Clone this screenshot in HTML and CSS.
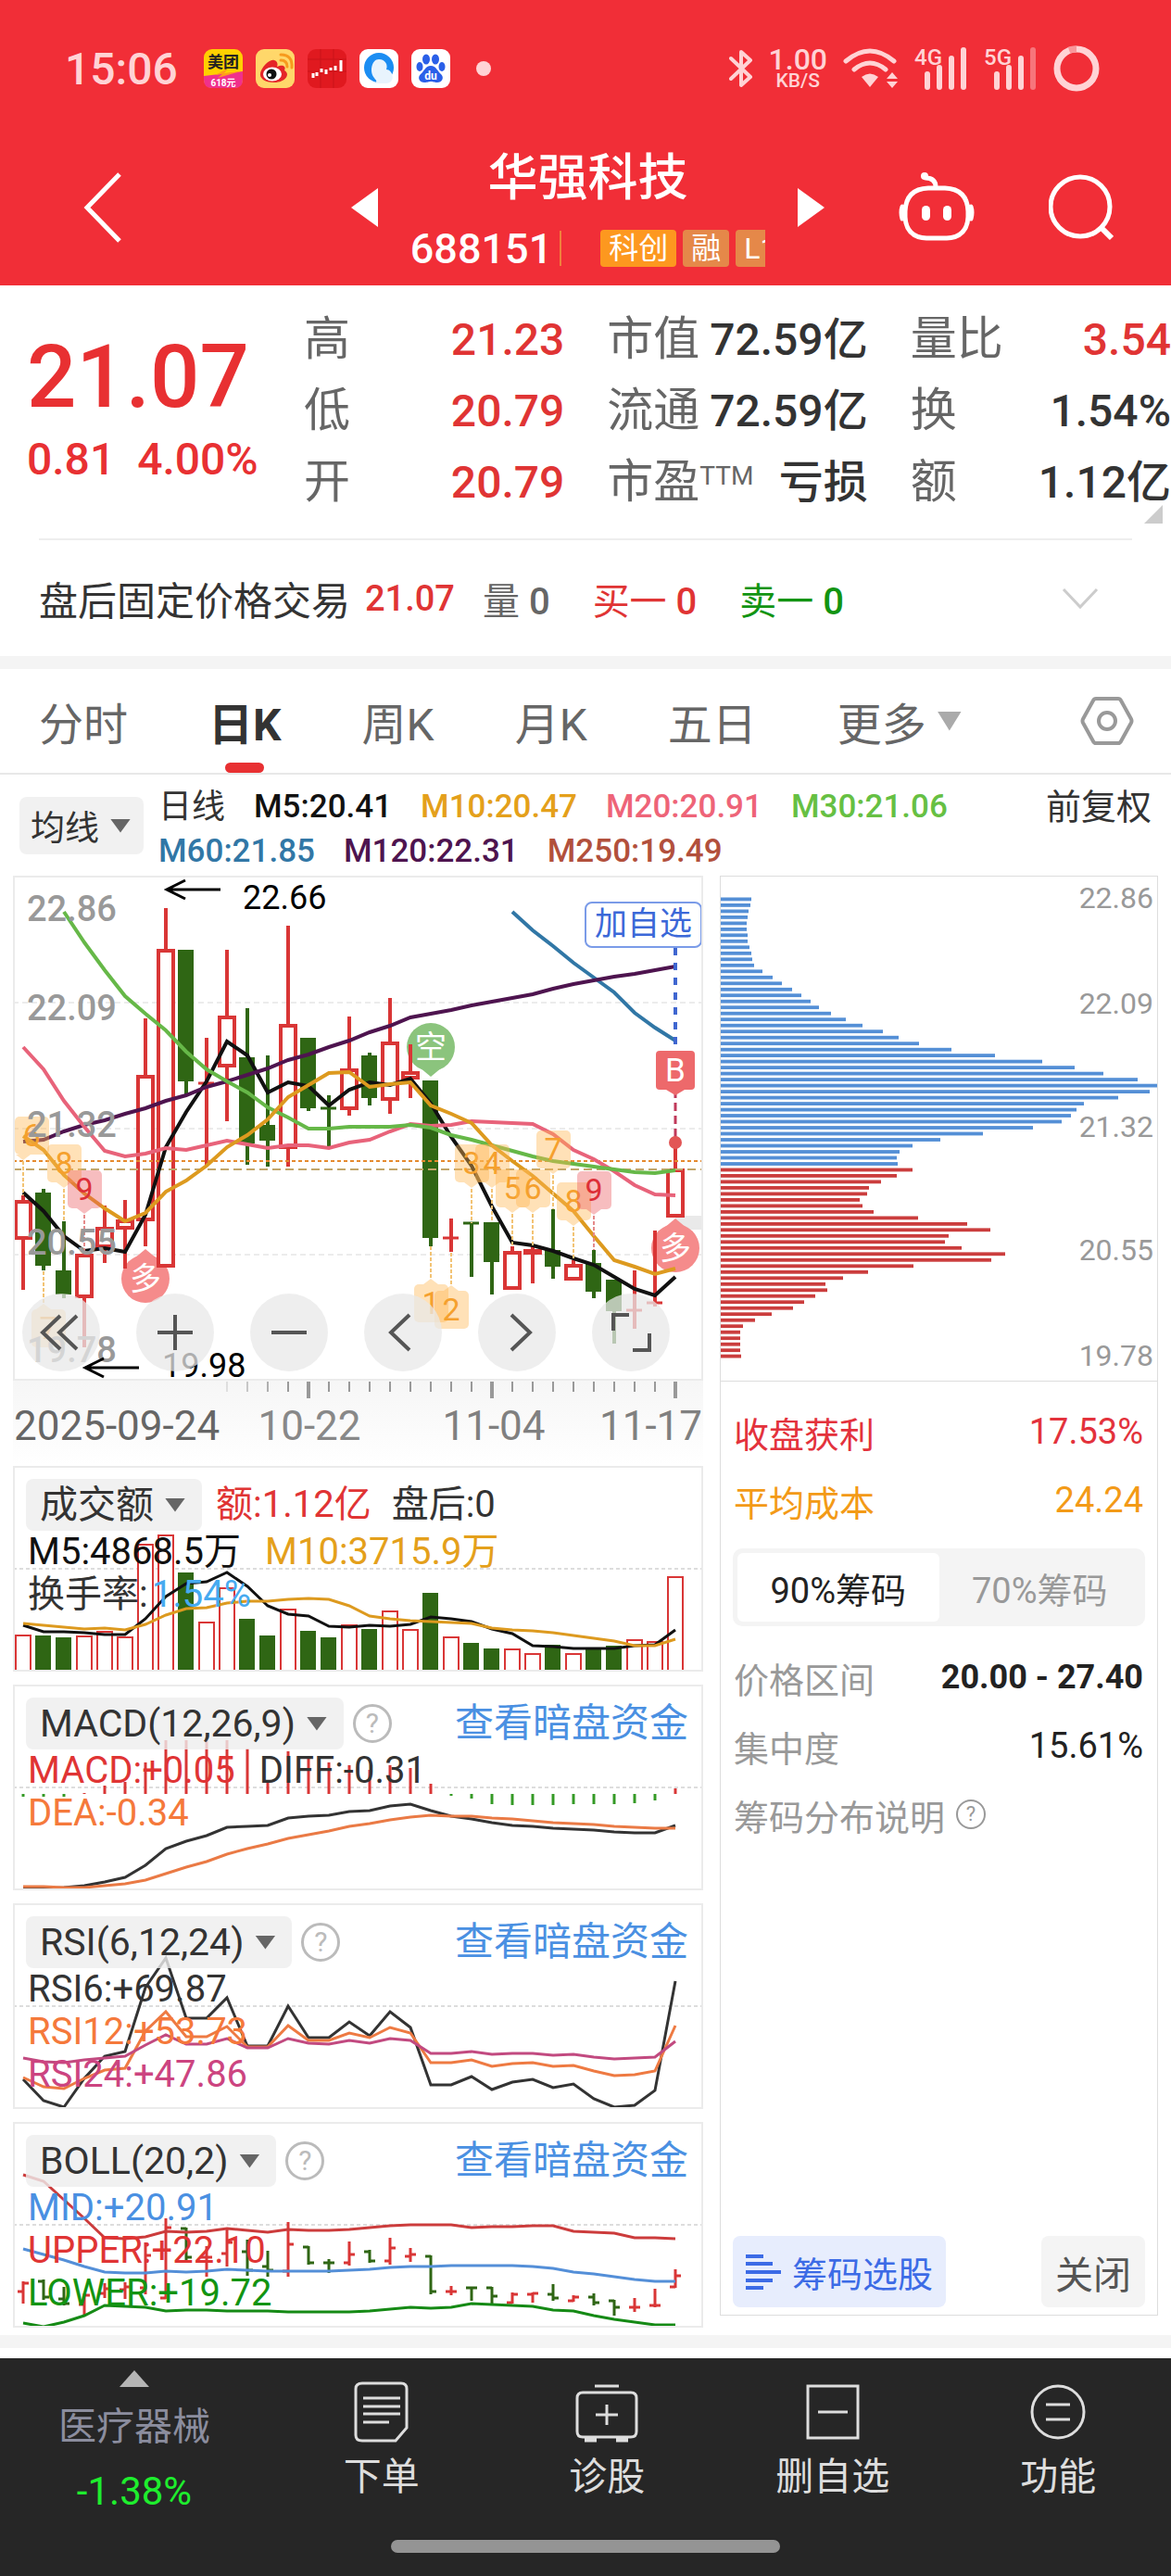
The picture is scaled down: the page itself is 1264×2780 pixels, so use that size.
FILE: index.html
```html
<!DOCTYPE html>
<html lang="zh-CN">
<head>
    <meta charset="UTF-8">
    <meta name="viewport" content="width=device-width, initial-scale=1.0">
    <title>华强科技 688151</title>
    <link rel="stylesheet" href="styles.css">
</head>
<body>

    <header class="header">
        <div class="status-bar">
            <span class="clock">15:06</span>
            <svg class="app-icon" viewBox="0 0 42 42">
                <rect width="42" height="42" rx="9" fill="#ffd000"/>
                <path d="M0 29 L42 24 V33 Q42 42 33 42 H9 Q0 42 0 33Z" fill="#f0308c"/>
                <path d="M12 28 L26 21 L22 26 L40 24 L15 31 L20 27Z" fill="#ff9d1c"/>
                <text x="21" y="20" text-anchor="middle" font-size="17" font-weight="700" fill="#222">美团</text>
                <text x="21" y="40" text-anchor="middle" font-size="10" font-weight="700" fill="#fff">618元</text>
            </svg>
            <svg class="app-icon" viewBox="0 0 42 42">
                <rect width="42" height="42" rx="9" fill="#ffd76a"/>
                <path d="M20 12 C24 13 24 17 23 19 C30 16 33 19 31 23 C38 27 32 36 20 36 C9 36 4 31 5 26 C6 20 15 10 20 12Z" fill="#e52528"/>
                <ellipse cx="18" cy="27" rx="10" ry="7.500" fill="#fff"/>
                <circle cx="17" cy="27" r="5.500" fill="#111"/>
                <circle cx="15" cy="28" r="2" fill="#fff"/>
                <path d="M27 12 Q34 12 34 19 M27 6 Q40 6 39 20" fill="none" stroke="#f79a1d" stroke-width="3" stroke-linecap="round"/>
            </svg>
            <svg class="app-icon" viewBox="0 0 42 42">
                <rect width="42" height="42" rx="9" fill="#e0191f"/>
                <path d="M0 11 H42 M0 24 H42 M14 0 V42 M28 0 V42" stroke="#c9151b" stroke-width="1"/>
                <path d="M6 26 V31 M10 25 V29 M15 21 V25 M20 22 V27 M25 20 V23 M30 18 V23 M36 12 V24" stroke="#fff" stroke-width="3"/>
            </svg>
            <svg class="app-icon" viewBox="0 0 42 42">
                <rect width="42" height="42" rx="9" fill="#fff"/>
                <circle cx="21" cy="20" r="16" fill="#1b8df2"/>
                <path d="M21 11 C28 11 31 17 29 22 C36 22 40 36 29 37 H15 C24 34 12 33 13 21 C14 14 17 11 21 11Z" fill="#e8f4fd"/>
            </svg>
            <svg class="app-icon" viewBox="0 0 42 42">
                <rect width="42" height="42" rx="9" fill="#fff"/>
                <g fill="#2a5fe8">
                    <ellipse cx="16" cy="11" rx="4" ry="5.500"/>
                    <ellipse cx="26" cy="11" rx="4" ry="5.500"/>
                    <ellipse cx="9" cy="19" rx="3.500" ry="5"/>
                    <ellipse cx="33" cy="19" rx="3.500" ry="5"/>
                    <path d="M21 18 C27 18 28 24 32 27 C36 31 33 36 28 36 C24 36 23 35 21 35 C19 35 18 36 14 36 C9 36 6 31 10 27 C14 24 15 18 21 18Z"/>
                </g>
                <text x="21" y="33" text-anchor="middle" font-size="12" font-weight="700" fill="#fff">du</text>
            </svg>
            <span class="more-dot"></span>

            <div class="status-right">
                <svg width="26" height="44" viewBox="0 0 26 44"><path d="M2 11 L23 31 L13 40 V4 L23 13 L2 33" fill="none" stroke="#ffd3d5" stroke-width="4" stroke-linejoin="round" stroke-linecap="round"/></svg>
                <span class="speed"><b>1.00</b><small>KB/S</small></span>
                <svg width="60" height="44" viewBox="0 0 60 44">
                    <path d="M3 14 Q29 -8 55 14 M12 23 Q29 9 46 23" fill="none" stroke="#ffd3d5" stroke-width="5" stroke-linecap="round"/>
                    <path d="M20 31 Q29 24 38 31 L29 42Z" fill="#ffd3d5"/>
                    <path d="M47 33 L53 26 L59 33Z M47 36 L53 43 L59 36Z" fill="#ffd3d5"/>
                </svg>
                <svg width="58" height="46" viewBox="0 0 58 46">
                    <text x="0" y="19" class="net">4G</text>
                    <path d="M14 43 V29 M27 43 V22 M40 43 V12 M53 43 V3" stroke="#ffd3d5" stroke-width="6" stroke-linecap="round"/>
                </svg>
                <svg width="58" height="46" viewBox="0 0 58 46">
                    <text x="0" y="19" class="net">5G</text>
                    <path d="M14 43 V29 M27 43 V22 M40 43 V12" stroke="#ffd3d5" stroke-width="6" stroke-linecap="round"/>
                    <path d="M53 43 V3" stroke="#f7757b" stroke-width="6" stroke-linecap="round"/>
                </svg>
                <svg width="50" height="50" viewBox="0 0 50 50">
                    <circle cx="25" cy="25" r="21" fill="none" stroke="#ffd3d5" stroke-width="7"/>
                    <path d="M17 5 Q20 4 25 4" fill="none" stroke="#f9979b" stroke-width="7"/>
                </svg>
            </div>
        </div>

        <div class="title-bar">
            <button class="icon-btn back" aria-label="返回">
                <svg width="42" height="76" viewBox="0 0 42 76"><path d="M39 2 L4 38 L39 74" fill="none" stroke="#fff" stroke-width="5"/></svg>
            </button>
            <div class="switcher">
                <button class="icon-btn" aria-label="上一只">
                    <svg width="29" height="42" viewBox="0 0 29 42"><path d="M29 0 V42 L0 21Z" fill="#fff"/></svg>
                </button>
                <div class="stock">
                    <h1>华强科技</h1>
                    <div class="code-row">
                        <span class="code">688151</span>
                        <span class="bar"></span>
                        <div class="tags">
                            <span class="tag tag-main">科创</span>
                            <span class="tag">融</span>
                            <span class="tag tag-cut">L1</span>
                        </div>
                    </div>
                </div>
                <button class="icon-btn" aria-label="下一只">
                    <svg width="29" height="42" viewBox="0 0 29 42"><path d="M0 0 V42 L29 21Z" fill="#fff"/></svg>
                </button>
            </div>
            <button class="icon-btn robot" aria-label="智能助手">
                <svg width="82" height="76" viewBox="0 0 82 76">
                    <g fill="none" stroke="#fff" stroke-width="5" stroke-linecap="round">
                        <path d="M40 18 Q40 8 29 8"/>
                        <path d="M32 19 H50 Q74 20 75 44 V50 Q74 72 52 73 H30 Q8 72 7 50 V44 Q8 20 32 19Z"/>
                        <path d="M4 39 Q2 45 4 52 M78 39 Q80 45 78 52"/>
                    </g>
                    <circle cx="28" cy="6" r="4" fill="#fff"/>
                    <rect x="25" y="38" width="9" height="16" rx="4.500" fill="#fff"/>
                    <rect x="48" y="38" width="9" height="16" rx="4.500" fill="#fff"/>
                </svg>
            </button>
            <button class="icon-btn" aria-label="搜索">
                <svg width="70" height="72" viewBox="0 0 70 72"><circle cx="34" cy="35" r="32" fill="none" stroke="#fff" stroke-width="5"/><path d="M56 57 L68 69" stroke="#fff" stroke-width="6"/></svg>
            </button>
        </div>
    </header>

    <section class="quote">
        <div class="price-box">
            <div class="price">21.07</div>
            <div class="change"><span>0.81</span><span>4.00%</span></div>
        </div>
        <dl class="stats">
            <div><dt>高</dt><dd class="up">21.23</dd></div>
            <div><dt>低</dt><dd class="up">20.79</dd></div>
            <div><dt>开</dt><dd class="up">20.79</dd></div>
        </dl>
        <dl class="stats">
            <div><dt>市值</dt><dd>72.59亿</dd></div>
            <div><dt>流通</dt><dd>72.59亿</dd></div>
            <div><dt>市盈<sup>TTM</sup></dt><dd>亏损</dd></div>
        </dl>
        <dl class="stats">
            <div><dt>量比</dt><dd class="up">3.54</dd></div>
            <div><dt>换</dt><dd>1.54%</dd></div>
            <div><dt>额</dt><dd>1.12亿</dd></div>
        </dl>
        <span class="corner"></span>
    </section>

    <section class="after-hours">
        <span class="after-title">盘后固定价格交易</span>
        <span class="up after-price">21.07</span>
        <span class="grey">量 <b>0</b></span>
        <span class="up">买一 <b>0</b></span>
        <span class="down">卖一 <b>0</b></span>
        <button class="icon-btn" aria-label="展开">
            <svg width="40" height="24" viewBox="0 0 40 24"><path d="M2 2 L20 21 L38 2" fill="none" stroke="#ccc" stroke-width="3"/></svg>
        </button>
    </section>

    <nav class="tabs">
        <button>分时</button>
        <button class="active">日K</button>
        <button>周K</button>
        <button>月K</button>
        <button>五日</button>
        <button>更多<i class="caret caret-light"></i></button>
        <button class="settings" aria-label="设置">
            <svg width="58" height="54" viewBox="0 0 58 54">
                <path d="M17 3 H41 Q43 3 44 5 L55 25 Q56 27 55 29 L44 49 Q43 51 41 51 H17 Q15 51 14 49 L3 29 Q2 27 3 25 L14 5 Q15 3 17 3Z" fill="none" stroke="#999" stroke-width="4"/>
                <circle cx="29" cy="27" r="9" fill="none" stroke="#999" stroke-width="4"/>
            </svg>
        </button>
    </nav>

    <section class="legend">
        <button class="pill pill-small">均线<i class="caret"></i></button>
        <div class="legend-items">
            <span>日线</span>
            <span class="m5">M5:20.41</span>
            <span class="m10">M10:20.47</span>
            <span class="m20">M20:20.91</span>
            <span class="m30">M30:21.06</span>
            <span class="m60">M60:21.85</span>
            <span class="m120">M120:22.31</span>
            <span class="m250">M250:19.49</span>
        </div>
        <button class="adjust">前复权</button>
    </section>

    <main class="board">
        <div class="charts">
            <div class="stack framed">
                <svg id="kline" class="chart" viewBox="0 0 745 545"></svg>
                <button class="add-watch">加自选</button>
                <div class="controls">
                    <button aria-label="最早"><svg viewBox="0 0 84 84"><path d="M41 24 L22 42 L41 60 M59 24 L40 42 L59 60"/></svg></button>
                    <button aria-label="放大"><svg viewBox="0 0 84 84"><path d="M23 42 H61 M42 23 V61"/></svg></button>
                    <button aria-label="缩小"><svg viewBox="0 0 84 84"><path d="M23 42 H61"/></svg></button>
                    <button aria-label="左移"><svg viewBox="0 0 84 84"><path d="M49 23 L29 42 L49 61"/></svg></button>
                    <button aria-label="右移"><svg viewBox="0 0 84 84"><path d="M36 23 L56 42 L36 61"/></svg></button>
                    <button aria-label="全屏"><svg viewBox="0 0 84 84"><path d="M23 40 V23 H40 M62 43 V61 H44"/></svg></button>
                </div>
            </div>
            <svg id="axis" class="axis" viewBox="0 0 745 92"></svg>

            <div class="stack framed">
                <svg id="volume" class="chart" viewBox="0 0 745 222"></svg>
                <div class="info">
                    <div class="info-head">
                        <button class="pill">成交额<i class="caret"></i></button>
                        <span class="up">额:1.12亿</span>
                        <span class="after">盘后:0</span>
                    </div>
                    <p><span class="m5">M5:4868.5万</span><span class="m10">M10:3715.9万</span></p>
                    <p>换手率:<em class="rate">1.54%</em></p>
                </div>
            </div>

            <div class="stack framed">
                <svg id="macd" class="chart" viewBox="0 0 745 222"></svg>
                <div class="info">
                    <div class="info-head">
                        <button class="pill">MACD(12,26,9)<i class="caret"></i></button>
                        <button class="help" aria-label="说明">?</button>
                        <a href="#">查看暗盘资金</a>
                    </div>
                    <p><span class="up">MACD:+0.05</span><span>DIFF:-0.31</span></p>
                    <p class="orange">DEA:-0.34</p>
                </div>
            </div>

            <div class="stack framed">
                <svg id="rsi" class="chart" viewBox="0 0 745 222"></svg>
                <div class="info">
                    <div class="info-head">
                        <button class="pill">RSI(6,12,24)<i class="caret"></i></button>
                        <button class="help" aria-label="说明">?</button>
                        <a href="#">查看暗盘资金</a>
                    </div>
                    <p>RSI6:+69.87</p>
                    <p class="orange">RSI12:+53.73</p>
                    <p class="magenta">RSI24:+47.86</p>
                </div>
            </div>

            <div class="stack framed">
                <svg id="boll" class="chart" viewBox="0 0 745 222"></svg>
                <div class="info">
                    <div class="info-head">
                        <button class="pill">BOLL(20,2)<i class="caret"></i></button>
                        <button class="help" aria-label="说明">?</button>
                        <a href="#">查看暗盘资金</a>
                    </div>
                    <p class="blue">MID:+20.91</p>
                    <p class="up">UPPER:+22.10</p>
                    <p class="down">LOWER:+19.72</p>
                </div>
            </div>
        </div>

        <aside class="chips">
            <svg id="chips" class="chart" viewBox="0 0 473 545"></svg>
            <div class="chips-body">
                <div class="row red"><span>收盘获利</span><span>17.53%</span></div>
                <div class="row gold"><span>平均成本</span><span>24.24</span></div>
                <div class="toggle">
                    <button class="on">90%筹码</button>
                    <button>70%筹码</button>
                </div>
                <div class="row"><span>价格区间</span><strong>20.00 - 27.40</strong></div>
                <div class="row"><span>集中度</span><b>15.61%</b></div>
                <div class="row note"><span>筹码分布说明</span><button class="help help-small" aria-label="说明">?</button></div>
                <div class="chips-foot">
                    <button class="pick">
                        <svg width="38" height="38" viewBox="0 0 38 38"><path d="M0 2 H19 M0 10 H29 M0 19 H38 M0 28 H29 M0 36 H19" stroke="#3c6be6" stroke-width="4"/></svg>
                        筹码选股
                    </button>
                    <button class="close">关闭</button>
                </div>
            </div>
        </aside>
    </main>

    <footer class="bottom">
        <nav class="bottom-nav">
            <a href="#" class="sector">
                <i class="tri-up"></i>
                <span>医疗器械</span>
                <b>-1.38%</b>
            </a>
            <a href="#">
                <svg width="60" height="66" viewBox="0 0 60 66"><path d="M9 2 H51 Q57 2 57 8 V50 L45 64 H9 Q2 64 2 58 V8 Q2 2 9 2Z M10 18 H50 M10 27 H50 M10 35 H50 M10 44 H38" fill="none" stroke="#ddd" stroke-width="3"/></svg>
                <span>下单</span>
            </a>
            <a href="#">
                <svg width="68" height="66" viewBox="0 0 68 66"><path d="M21 5 H47 M8 12 H60 Q66 12 66 18 V54 Q66 60 60 60 H8 Q2 60 2 54 V18 Q2 12 8 12Z M34 25 V47 M22 36 H46" fill="none" stroke="#ddd" stroke-width="3"/><path d="M10 63 H23 M44 63 H57" stroke="#ddd" stroke-width="5"/></svg>
                <span>诊股</span>
            </a>
            <a href="#">
                <svg width="58" height="66" viewBox="0 0 58 66"><path d="M2 5 H56 V61 H2Z M13 33 H45" fill="none" stroke="#ddd" stroke-width="3"/></svg>
                <span>删自选</span>
            </a>
            <a href="#">
                <svg width="60" height="66" viewBox="0 0 60 66"><path d="M17 25 H43 M17 41 H43" stroke="#ddd" stroke-width="3"/><circle cx="30" cy="33" r="28" fill="none" stroke="#ddd" stroke-width="3"/></svg>
                <span>功能</span>
            </a>
        </nav>
        <div class="home-bar"></div>
    </footer>

    <script src="charts.js"></script>
</body>
</html>
```

FILE: styles.css
```css
* {
    box-sizing: border-box;
}
body {
    margin: 0;
    background: #fff;
    color: #333;
    font-family: Roboto, "Noto Sans CJK SC", sans-serif;
    overflow-x: hidden;
}
h1, p, dl, dd {
    margin: 0;
}
button {
    font: inherit;
    color: inherit;
    background: none;
    border: none;
    padding: 0;
    cursor: pointer;
}
a {
    text-decoration: none;
}
svg {
    display: block;
}
.up { color: #e03434; }
.down { color: #129412; }
.grey { color: #666; }
.orange { color: #f5793b; }
.magenta { color: #cc4480; }
.blue { color: #4a90e2; }
.m5 { color: #111; }
.m10 { color: #e4a01b; }
.m20 { color: #ee6478; }
.m30 { color: #66c043; }
.m60 { color: #3177a6; }
.m120 { color: #4e144f; }
.m250 { color: #b2503c; }

/* header */
.header {
    background: #f12e37;
    color: #fff;
}
.status-bar {
    display: flex;
    align-items: center;
    gap: 14px;
    height: 140px;
    padding: 8px 77px 0 70px;
    color: #ffd3d5;
}
.clock {
    font-size: 48px;
    font-weight: 500;
    margin-right: 14px;
}
.app-icon {
    width: 42px;
    height: 42px;
}
.more-dot {
    width: 16px;
    height: 16px;
    margin-left: 14px;
    border-radius: 50%;
    background: #ffd3d5;
}
.status-right {
    display: flex;
    align-items: center;
    gap: 17px;
    margin-left: auto;
}
.speed {
    display: flex;
    flex-direction: column;
    align-items: center;
}
.speed b {
    font-size: 32px;
    line-height: 26px;
    font-weight: 500;
}
.speed small {
    font-size: 21px;
    line-height: 20px;
    font-weight: 500;
}
.net {
    font-size: 24px;
    font-weight: 500;
    fill: #ffd3d5;
}
.title-bar {
    display: flex;
    align-items: center;
    gap: 80px;
    height: 168px;
    padding: 0 62px 0 90px;
}
.back {
    margin-right: auto;
}
.robot {
    margin-bottom: 4px;
}
.switcher {
    display: flex;
    align-items: center;
}
.stock {
    width: 453px;
    padding-top: 2px;
    text-align: center;
}
.stock h1 {
    font-size: 54px;
    line-height: 86px;
    font-weight: 500;
}
.code-row {
    display: flex;
    align-items: center;
    justify-content: center;
    height: 64px;
}
.code {
    font-size: 45px;
    font-weight: 500;
}
.bar {
    width: 2px;
    height: 38px;
    margin: 0 42px 0 8px;
    background: #f0803c;
}
.tags {
    display: flex;
    gap: 7px;
    width: 178px;
    overflow: hidden;
}
.tag {
    flex: none;
    padding: 0 9px;
    font-size: 32px;
    line-height: 40px;
    border-radius: 4px;
    background: #e58849;
}
.tag-main {
    background: #fd981f;
}

/* quote */
.quote {
    position: relative;
    display: grid;
    grid-template-columns: 253px repeat(3, 1fr);
    column-gap: 46px;
    padding: 20px 0 22px 29px;
    white-space: nowrap;
}
.price-box {
    padding-top: 22px;
    color: #e83032;
    font-weight: 500;
}
.price {
    font-size: 94px;
    line-height: 114px;
}
.change {
    display: flex;
    gap: 24px;
    font-size: 48px;
    line-height: 64px;
}
.stats div {
    display: flex;
    justify-content: space-between;
    font-size: 48px;
    line-height: 77px;
    height: 77px;
}
.stats dt {
    font-size: 50px;
    color: #666;
}
.stats dd {
    font-weight: 500;
}
.stats sup {
    font-size: 28px;
    line-height: 0;
    vertical-align: 14px;
}
.corner {
    position: absolute;
    right: 9px;
    bottom: 16px;
    width: 20px;
    height: 20px;
    background: #ccc;
    clip-path: polygon(100% 0, 100% 100%, 0 100%);
}
.after-hours {
    display: flex;
    align-items: center;
    gap: 46px;
    height: 127px;
    margin: 0 42px;
    padding-right: 36px;
    border-top: 2px solid #eee;
    font-size: 40px;
}
.after-hours .after-title {
    margin-right: -30px;
    font-size: 42px;
}
.after-hours .after-price {
    margin-right: -16px;
    font-size: 38px;
    font-weight: 500;
}
.after-hours b {
    font-weight: 500;
}
.after-hours .icon-btn {
    margin-left: auto;
}

/* tabs */
.tabs {
    display: flex;
    align-items: center;
    gap: 87px;
    height: 128px;
    padding: 0 40px 0 42px;
    border-top: 14px solid #f4f4f4;
    border-bottom: 2px solid #e8e8e8;
    font-size: 48px;
    color: #666;
}
.tabs button {
    position: relative;
    display: flex;
    align-items: center;
    gap: 12px;
    height: 112px;
}
.tabs .active {
    color: #333;
    font-weight: 700;
}
.tabs .active::after {
    content: "";
    position: absolute;
    left: 50%;
    bottom: 0;
    width: 42px;
    height: 11px;
    margin-left: -21px;
    border-radius: 6px;
    background: #e83032;
}
.tabs .settings {
    margin-left: auto;
}
.caret {
    width: 22px;
    height: 15px;
    background: #666;
    clip-path: polygon(0 0, 100% 0, 50% 100%);
}
.caret-light {
    width: 26px;
    height: 21px;
    background: #aaa;
}

/* moving averages */
.legend {
    display: flex;
    align-items: flex-start;
    gap: 16px;
    height: 109px;
    padding: 11px 21px 0;
}
.pill {
    display: flex;
    align-items: center;
    gap: 12px;
    height: 56px;
    padding: 0 18px 0 15px;
    border-radius: 8px;
    background: rgba(238, 238, 238, 0.8);
    font-size: 41px;
}
.pill-small {
    height: 62px;
    margin-top: 13px;
    padding: 0 14px 0 12px;
    font-size: 37px;
}
.legend-items {
    display: flex;
    flex-wrap: wrap;
    column-gap: 31px;
    width: 880px;
    font-size: 35px;
    line-height: 48px;
    font-weight: 500;
}
.legend-items span:first-child {
    font-size: 36px;
    font-weight: 400;
}
.adjust {
    margin-left: auto;
    font-size: 38px;
    line-height: 48px;
    white-space: nowrap;
}

/* charts */
.board {
    display: grid;
    grid-template-columns: 745fr 473fr;
    gap: 18px;
    padding: 0 14px 8px;
    border-bottom: 14px solid #f4f4f4;
}
.charts {
    display: flex;
    flex-direction: column;
}
.stack {
    display: grid;
    margin-bottom: 14px;
}
.stack > * {
    grid-area: 1 / 1;
}
.stack:first-child, .stack:last-child {
    margin-bottom: 0;
}
.framed {
    outline: 2px solid #ebebeb;
    outline-offset: -2px;
}
.chart, .axis {
    width: 100%;
    height: auto;
}
.axis {
    background: linear-gradient(#f6f6f6, #fff);
}
.add-watch {
    justify-self: end;
    align-self: start;
    width: 127px;
    height: 50px;
    margin: 28px 1px;
    border: 2px solid #7a9be8;
    border-radius: 8px;
    background: #fff;
    color: #3b68d8;
    font-size: 35px;
    line-height: 44px;
}
.controls {
    display: flex;
    justify-content: space-between;
    align-self: end;
    margin: 0 36px 10px 10px;
}
.controls button {
    width: 84px;
    height: 84px;
    border-radius: 50%;
    background: rgba(232, 232, 232, 0.75);
}
.controls path {
    fill: none;
    stroke: #555;
    stroke-width: 4;
}
.info {
    position: relative;
    padding: 14px 16px 0;
    font-size: 40px;
    line-height: 46px;
}
.info-head {
    display: flex;
    align-items: center;
    gap: 10px;
    margin-left: -2px;
    height: 56px;
}
.info-head .up {
    margin: 0 12px 0 5px;
}
.info-head a {
    margin-left: auto;
    font-size: 42px;
    color: #4a90e2;
}
.info p {
    display: flex;
    gap: 26px;
    height: 46px;
}
.info .rate {
    margin-left: -22px;
    font-style: normal;
    color: #46aaf0;
}
.help {
    width: 42px;
    height: 42px;
    border: 3px solid #bbb;
    border-radius: 50%;
    color: #bbb;
    font-size: 30px;
    line-height: 36px;
}
.help-small {
    width: 32px;
    height: 32px;
    border-width: 2px;
    border-color: #999;
    color: #999;
    font-size: 22px;
    line-height: 28px;
}

/* chip distribution */
.chips {
    display: flex;
    flex-direction: column;
    margin-bottom: 13px;
    outline: 1px solid #ddd;
    outline-offset: -1px;
}
.chips-body {
    display: flex;
    flex-direction: column;
    flex: 1;
    padding: 17px 14px 9px;
    border-top: 1px solid #ddd;
    font-size: 38px;
}
.row {
    display: flex;
    align-items: center;
    justify-content: space-between;
    height: 74px;
    padding: 0 2px 0 1px;
    color: #999;
}
.row b {
    font-weight: 400;
    color: #222;
}
.row strong {
    font-size: 36px;
    font-weight: 700;
    color: #222;
}
.red { color: #e3323c; }
.gold { color: #f39a17; }
.note {
    justify-content: flex-start;
    gap: 12px;
}
.toggle {
    display: flex;
    height: 84px;
    margin: 15px 0 18px;
    padding: 5px;
    border-radius: 10px;
    background: #f4f4f4;
    color: #999;
}
.toggle button {
    flex: 1;
    border-radius: 6px;
}
.toggle .on {
    background: #fff;
    color: #222;
}
.chips-foot {
    display: flex;
    justify-content: space-between;
    margin-top: auto;
}
.chips-foot button {
    display: flex;
    align-items: center;
    height: 77px;
    border-radius: 8px;
}
.pick {
    gap: 12px;
    padding: 0 14px;
    background: #e7edfd;
    color: #3c6be6;
}
.chips-foot .close {
    padding: 0 15px;
    background: #f4f4f4;
    color: #555;
    font-size: 41px;
}

/* bottom bar */
.bottom {
    margin-top: 11px;
    padding-bottom: 25px;
    background: #262626;
}
.bottom-nav {
    display: grid;
    grid-template-columns: 290px repeat(4, 1fr);
    height: 196px;
}
.bottom-nav a {
    display: flex;
    flex-direction: column;
    align-items: center;
    gap: 10px;
    padding-top: 25px;
    font-size: 41px;
    line-height: 54px;
    color: #ddd;
}
.bottom-nav .sector {
    gap: 16px;
    padding-top: 13px;
    color: #8b8d9e;
}
.sector b {
    font-size: 42px;
    font-weight: 400;
    color: #1eee2e;
}
.tri-up {
    width: 32px;
    height: 18px;
    background: #b5b5b5;
    clip-path: polygon(50% 0, 100% 100%, 0 100%);
}
.home-bar {
    width: 420px;
    height: 14px;
    margin: 0 auto;
    border-radius: 7px;
    background: #949494;
}
```

FILE: charts.js
```js
const RED = "#d93636";
const GREEN = "#2f6614";

// [direction, high, body top, body bottom, low]
const candles = [
    [1, 322, 327, 366, 417], [0, 315, 319, 393, 398], [0, 348, 398, 422, 426], [1, 380, 381, 425, 475],
    [1, 332, 354, 374, 390], [1, 327, 346, 356, 396], [1, 144, 201, 347, 373], [1, 33, 74, 394, 394],
    [0, 75, 75, 207, 220], [1, 163, 209, 210, 292], [1, 75, 141, 192, 247], [0, 133, 183, 270, 291],
    [0, 181, 251, 267, 293], [1, 50, 149, 274, 293], [0, 163, 163, 234, 237], [0, 221, 234, 235, 275],
    [1, 142, 194, 235, 242], [0, 178, 181, 224, 231], [1, 123, 167, 226, 240], [1, 170, 197, 204, 224],
    [0, 206, 206, 365, 373], [1, 345, 365, 366, 379], [0, 350, 350, 351, 404], [0, 349, 349, 389, 422],
    [1, 373, 378, 416, 416], [1, 373, 376, 380, 411], [0, 336, 377, 394, 406], [1, 387, 391, 407, 408],
    [0, 377, 390, 419, 426], [0, 407, 407, 439, 471], [1, 398, 438, 439, 456], [1, 357, 430, 431, 434],
    [1, 268, 295, 343, 343]
];

const x = i => 11 + 22 * i;
// price units to pixels in the main chart
const py = v => Math.round(v * 15 / 14);

function line(values, color, start = 0, width = 3) {
    const points = values.map((v, i) => `${x(i + start)},${v}`).join(" ");
    return `<polyline points="${points}" fill="none" stroke="${color}" stroke-width="${width}"/>`;
}

function average(values, color, start = 0) {
    return line(values.map(py), color, start, 4);
}

function dashed(y, color, dash, width = 1) {
    return `<path d="M0 ${y} H745" stroke="${color}" stroke-width="${width}" stroke-dasharray="${dash}"/>`;
}

function label(px, y, text, size, color, anchor = "start", weight = 400) {
    return `<text x="${px}" y="${y}" font-size="${size}" fill="${color}" text-anchor="${anchor}" font-weight="${weight}" dominant-baseline="central">${text}</text>`;
}

function candle([up, ...prices], i) {
    const cx = x(i);
    const [high, top, bottom, low] = prices.map(py);
    const color = up ? RED : GREEN;
    let out = `<path d="M${cx} ${high} V${top} M${cx} ${bottom} V${low}" stroke="${color}" stroke-width="4"/>`;
    if (bottom - top < 3) {
        out += `<path d="M${cx - 9} ${top} H${cx + 8}" stroke="${color}" stroke-width="3"/>`;
    } else if (up) {
        out += `<rect x="${cx - 8}" y="${top + 2}" width="16" height="${Math.max(bottom - top - 3, 2)}" fill="#fff" stroke="${RED}" stroke-width="4"/>`;
    } else {
        out += `<rect x="${cx - 9}" y="${top}" width="17" height="${bottom - top}" fill="${GREEN}"/>`;
    }
    return out;
}

// numbered signal: candle index, digit, box top, end of the dotted line
function signal([i, digit, boxTop, lineEnd, below, shift = 0]) {
    const cx = x(i);
    const bx = cx + shift;
    const top = py(boxTop);
    const hot = digit === 9;
    const fill = hot ? "rgba(235,90,95,.4)" : "rgba(255,184,84,.42)";
    const from = below ? top - 7 : top + 48;
    const tip = below
        ? `M${cx - 8} ${top} L${cx} ${top - 6} L${cx + 8} ${top}Z`
        : `M${cx - 8} ${top + 41} L${cx} ${top + 47} L${cx + 8} ${top + 41}Z`;
    return `<path d="M${cx} ${from} V${py(lineEnd)}" stroke="${hot ? "#e58a8a" : "#f2c374"}" stroke-width="2" stroke-dasharray="4 2"/>
        <rect x="${bx - 18}" y="${top}" width="37" height="41" rx="5" fill="${fill}"/>
        <path d="${tip}" fill="${fill}"/>` + label(bx, top + 20, digit, 34, hot ? "#dd2f38" : "#f5a02d", "middle");
}

function pin(cx, cy, text, color, dir) {
    return `<circle cx="${cx}" cy="${cy}" r="26" fill="${color}"/>
        <path d="M${cx - 12} ${cy + 22 * dir} L${cx} ${cy + 32 * dir} L${cx + 12} ${cy + 22 * dir}Z" fill="${color}"/>`
        + label(cx, cy, text, 34, "#fff", "middle");
}

const ma5 = [319,338,363,378,375,379,342,273,238,207,167,181,218,208,212,231,216,208,211,204,230,263,292,333,370,372,378,385,392,404,416,423,404];
const ma10 = [262,276,301,320,335,348,340,318,307,292,273,261,245,223,211,199,198,213,210,208,231,240,249,272,287,302,320,338,363,387,394,401,396];
const ma20 = [173,195,227,253,277,283,280,274,276,272,267,271,274,272,272,274,269,266,258,250,252,251,247,248,249,250,260,276,286,298,312,321,322];
const ma30 = [36,67,95,121,139,156,177,195,207,218,233,244,255,255,253,253,253,251,254,261,266,272,277,283,287,290,293,296,299,300,297];
const ma60 = [36,55,71,88,103,118,138,153,166];
const ma120 = [268,266,258,251,246,240,234,227,221,213,207,201,194,186,180,173,166,158,151,143,139,135,131,127,123,119,114,109,105,102,99,95,91];

const signals = [
    [0, 6, 243, 322, 0, 9], [1, 7, 437, 398, 1, 5], [2, 8, 271, 348], [3, 9, 297, 380],
    [20, 1, 412, 373, 1], [21, 2, 418, 379, 1],
    [22, 3, 271, 350], [23, 4, 271, 349], [24, 5, 296, 373], [25, 6, 296, 373],
    [26, 7, 257, 336], [27, 8, 309, 387], [28, 9, 298, 377]
];

document.getElementById("kline").innerHTML =
    [137, 273, 409].map(y => dashed(y, "#d8d8d8", "6 4")).join("")
    + `<rect x="715" y="367" width="30" height="15" fill="#e9e9e9"/>`
    + pin(143, 435, "多", "#f58b8b", -1) + pin(715, 402, "多", "#f58b8b", -1) + pin(451, 185, "空", "#8bc47d", 1)
    + candles.map(candle).join("")
    + dashed(308, "#e58a2e", "4 3", 2) + dashed(317, "#c2a66b", "9 5", 2)
    + average(ma5, "#111") + average(ma60, "#3177a6", 24) + average(ma120, "#4e144f")
    + average(ma20, "#e8637a") + average(ma30, "#66b848", 2) + average(ma10, "#dd9a1f")
    + `<path d="M715 78 V189" stroke="#3f66d0" stroke-width="4" stroke-dasharray="8 8"/>
       <path d="M715 189 V282" stroke="#c0395a" stroke-width="3" stroke-dasharray="9 5"/>
       <circle cx="715" cy="288" r="7" fill="#e25555"/>
       <rect x="694" y="189" width="42" height="42" rx="4" fill="#ed696b"/><path d="M705 231 L715 237 L725 231Z" fill="#ed696b"/>`
    + label(715, 210, "B", 35, "#fff", "middle")
    + signals.map(signal).join("")
    + [["22.86", 36], ["22.09", 143], ["21.32", 269], ["20.55", 396], ["19.78", 512]]
        .map(([t, y]) => label(15, y, t, 38, "#999", "start", 500)).join("")
    + `<path d="M224 15 H166 M186 5 L166 15 L186 25 M136 531 H78 M98 521 L78 531 L98 541" fill="none" stroke="#000" stroke-width="3"/>`
    + label(248, 24, "22.66", 36, "#000") + label(161, 529, "19.98", 36, "#000");

let ticks = "";
for (let i = 10; i <= 32; i++) {
    const major = (i - 14) % 9 === 0;
    ticks += `<path d="M${x(i)} 1 V${major ? 19 : 12}" stroke="#999" stroke-width="${major ? 4 : 2}" opacity="${Math.min(1, (i - 9) / 4)}"/>`;
}
document.getElementById("axis").innerHTML = ticks
    + label(1, 49, "2025-09-24", 44, "#666", "start")
    + label(320, 49, "10-22", 44, "#888", "middle")
    + label(519, 49, "11-04", 44, "#808080", "middle")
    + label(744, 49, "11-17", 44, "#808080", "end");

const volumes = [182,183,185,183,178,184,84,74,115,168,131,165,183,154,178,185,171,176,156,176,137,184,191,197,197,202,193,202,197,194,187,189,119];
document.getElementById("volume").innerHTML = dashed(111, "#ddd", "4 3", 2)
    + volumes.map((v, i) => candles[i][0]
        ? `<rect x="${x(i) - 8}" y="${v + 1}" width="16" height="${220 - v}" fill="#fff" stroke="${RED}" stroke-width="2"/>`
        : `<rect x="${x(i) - 9}" y="${v}" width="17" height="${222 - v}" fill="${GREEN}"/>`).join("")
    + line([172,179,179,180,182,182,165,141,127,125,115,130,151,160,162,173,174,172,173,171,163,165,168,176,181,194,195,197,197,197,194,193,177], "#111")
    + line([170,172,174,176,175,177,171,161,154,153,148,146,146,144,143,144,151,162,165,167,168,169,170,175,177,178,180,183,186,189,194,194,187], "#dd9a1f");

const macd = [121,121,121,117,109,105,84,60,60,60,60,69,104,72,79,84,87,92,87,90,107,120,123,129,130,130,130,129,129,129,128,125,112];
document.getElementById("macd").innerHTML = dashed(111, "#ddd", "4 3", 2)
    + macd.map((v, i) => `<path d="M${x(i)} 118 V${v}" stroke="${v < 118 ? RED : "#359a26"}" stroke-width="3"/>`).join("")
    + line([220,220,219,217,213,208,195,177,169,163,154,153,152,144,142,141,137,136,131,129,136,142,145,149,152,153,155,156,157,159,160,160,152], "#333")
    + line([218,218,219,219,217,215,211,204,197,191,183,177,172,166,162,158,153,150,146,143,141,142,142,144,145,147,149,150,151,153,154,155,155], "#ea7a45");

document.getElementById("rsi").innerHTML = dashed(111, "#ddd", "4 3", 2)
    + line([190,213,220,189,165,160,91,59,124,124,102,154,154,111,145,145,128,143,117,134,196,196,187,201,193,190,199,195,211,220,218,202,84], "#333")
    + line([188,198,200,189,180,178,138,117,144,144,133,155,155,132,148,148,140,145,134,140,172,172,169,176,173,172,176,175,181,186,185,181,132], "#ee7a42")
    + line([167,171,172,169,167,165,153,142,152,152,146,156,156,146,151,152,148,151,146,148,162,162,160,163,162,162,164,163,166,168,167,166,149], "#c24a80");

// same candles as OHLC bars on the band scale
function ohlc([up, high, top, bottom, low], i) {
    const y = v => Math.round(97 + v * 0.235);
    const open = y(up ? bottom : top);
    const close = y(up ? top : bottom);
    return `<path d="M${x(i)} ${y(high) - 1} V${y(low) + 1} M${x(i) - 6} ${open} H${x(i)} M${x(i)} ${close} H${x(i) + 6}" fill="none" stroke="${up ? RED : GREEN}" stroke-width="3"/>`;
}
document.getElementById("boll").innerHTML = dashed(111, "#ddd", "4 3", 2)
    + candles.map(ohlc).join("")
    + line([57,64,84,104,125,126,124,118,119,118,115,117,119,116,117,117,116,114,112,111,111,111,114,113,113,112,112,118,119,120,125,125,126], "#cc3c3c")
    + line([137,143,149,156,162,163,163,161,162,161,159,160,161,161,161,161,160,159,157,156,156,155,155,155,155,156,158,162,164,167,170,172,172], "#548fd8")
    + line([217,221,216,209,198,199,200,204,203,203,204,204,204,205,205,205,205,204,202,200,201,200,196,197,198,199,203,204,209,213,216,219,219], "#158a15");

const trapped = [33,32,30,29,28,28,29,29,31,33,34,36,45,56,66,77,87,97,106,119,135,153,175,192,214,249,296,347,382,413,450,472,463,429,392,384,378,368,337,283,237,207,193,190,191];
const profit = [207,190,173,160,158,150,153,165,213,266,291,246,242,260,307,292,208,159,132,113,115,102,90,78,55,37,24,21,21,21,21,22];
document.getElementById("chips").innerHTML =
    trapped.concat(profit).map((w, i) =>
        `<rect x="1" y="${(23.5 + i * 6.49).toFixed(1)}" width="${w}" height="3.8" fill="${i < trapped.length ? "#548fd6" : "#cb3d3d"}"/>`).join("")
    + [["22.86", 24], ["22.09", 138], ["21.32", 271], ["20.55", 404], ["19.78", 518]]
        .map(([t, y]) => label(468, y, t, 32, "#999", "end")).join("");
```
